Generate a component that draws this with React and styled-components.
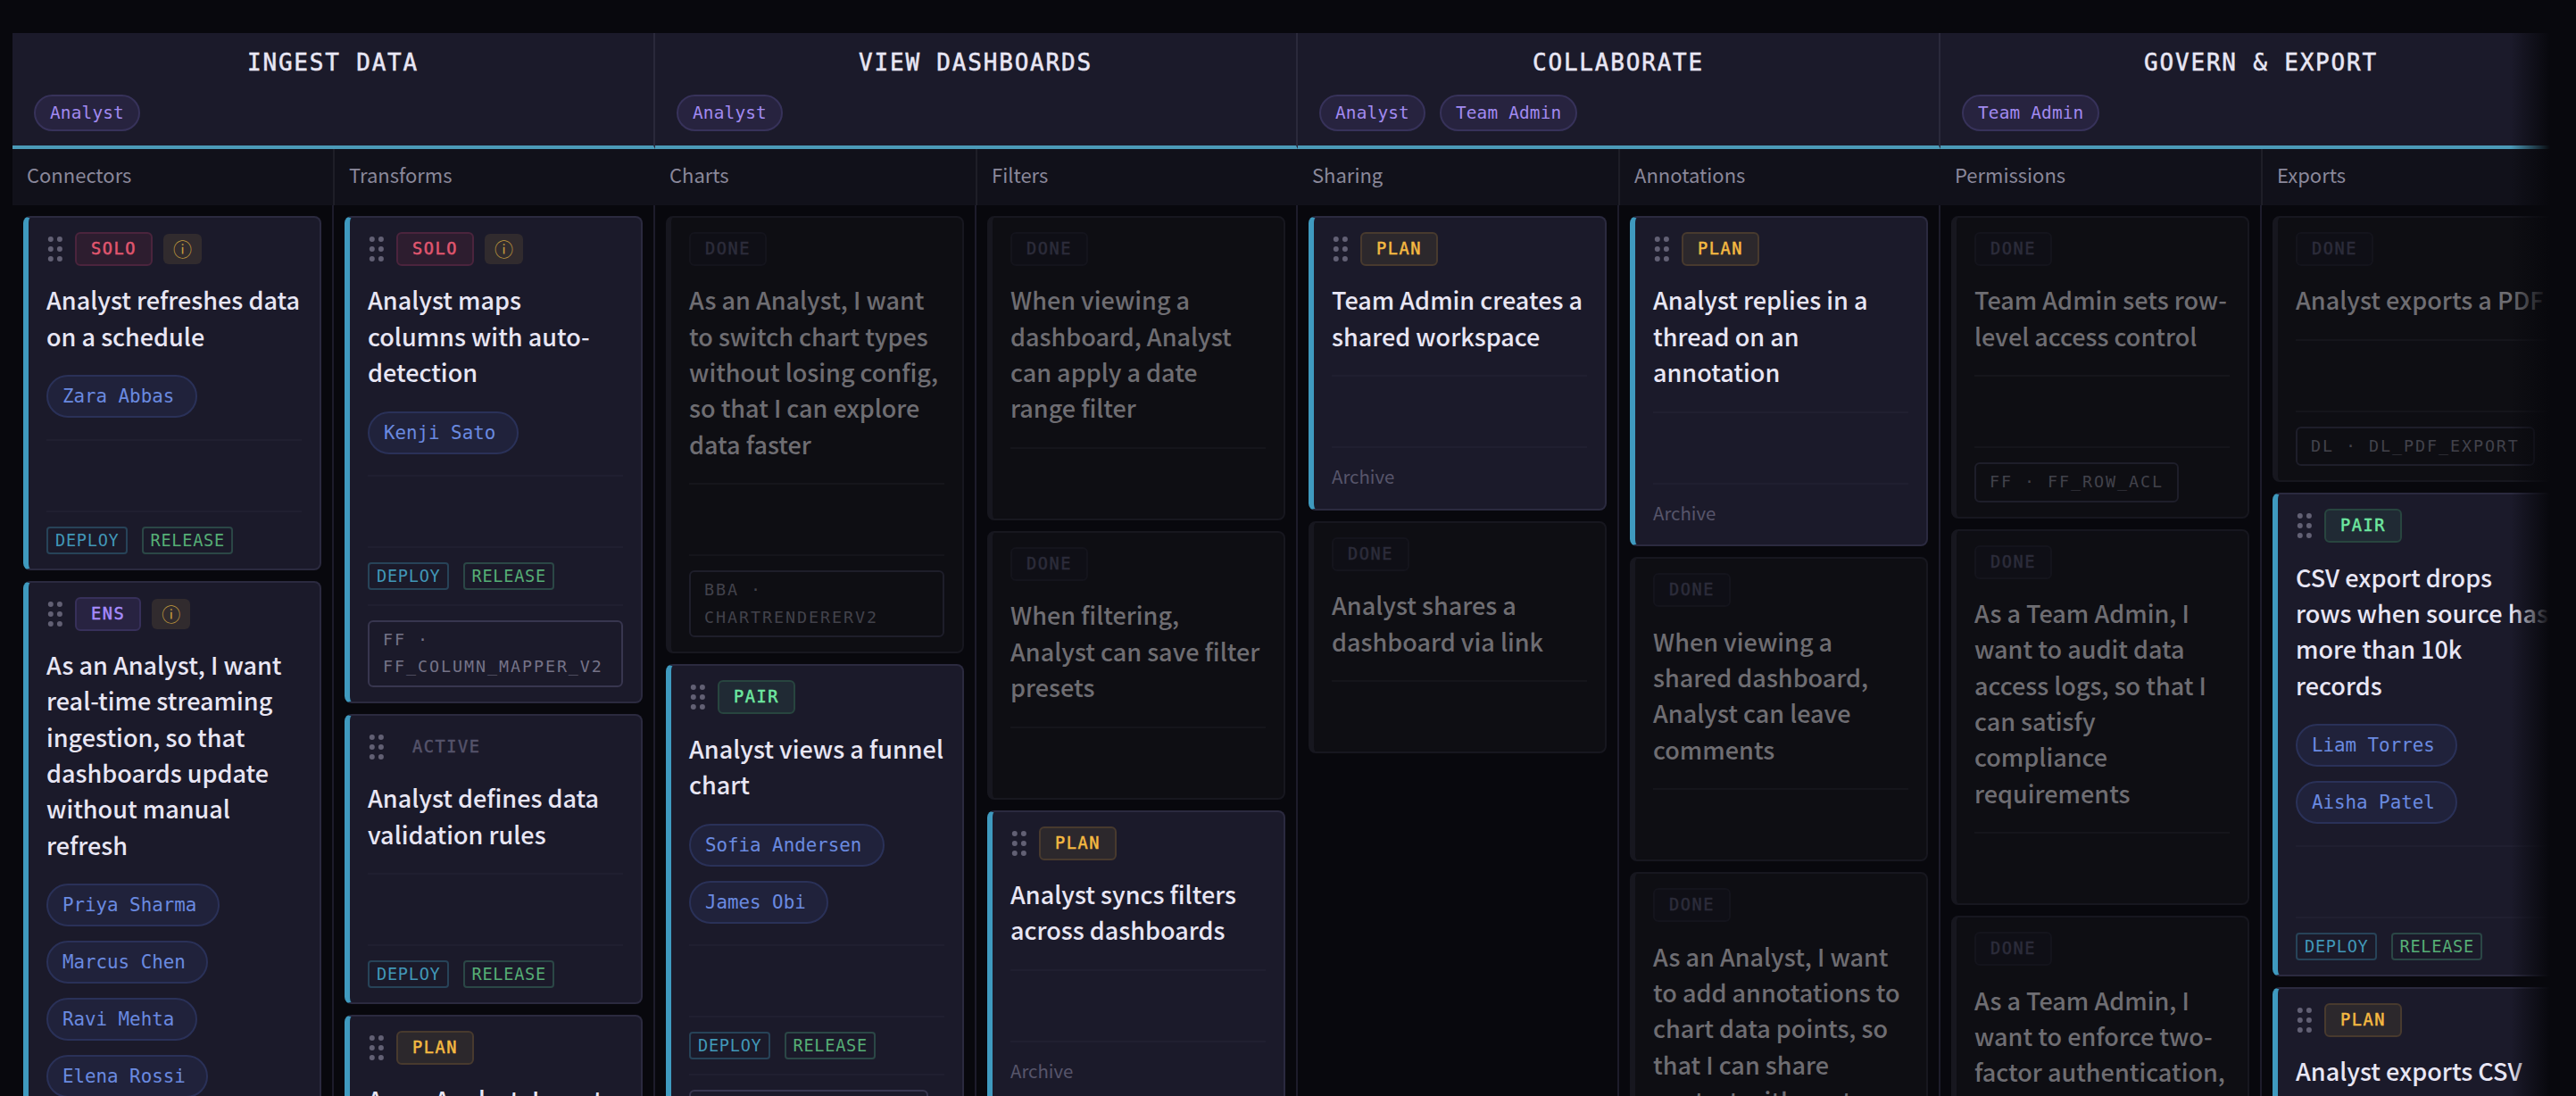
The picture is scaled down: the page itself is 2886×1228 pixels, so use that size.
import React from "react";
import styled, { createGlobalStyle, css } from "styled-components";

const sans = `"Noto Sans CJK JP", "Open Sans", sans-serif`;
const mono = `"DejaVu Sans Mono", monospace`;

const solo = { label: "SOLO", color: "#e0576f", bg: "#2d1d2f", border: "#4b243d" };
const ens = { label: "ENS", color: "#a78bfa", bg: "#282341", border: "#37305a" };
const pair = { label: "PAIR", color: "#6ee7a0", bg: "#202a34", border: "#28453f" };
const plan = { label: "PLAN", color: "#f5b942", bg: "#2c282c", border: "#483a2e" };
const active = { label: "ACTIVE", color: "#55536a", bg: "transparent", border: "transparent" };

const activities = [
  {
    title: "INGEST DATA",
    personas: ["Analyst"],
    steps: [
      {
        name: "Connectors",
        cards: [
          { status: solo, info: true, title: ["Analyst refreshes data", "on a schedule"], people: ["Zara Abbas"], ship: true },
          {
            status: ens,
            info: true,
            title: ["As an Analyst, I want", "real-time streaming", "ingestion, so that", "dashboards update", "without manual", "refresh"],
            people: ["Priya Sharma", "Marcus Chen", "Ravi Mehta", "Elena Rossi"],
            ship: true,
          },
        ],
      },
      {
        name: "Transforms",
        cards: [
          { status: solo, info: true, title: ["Analyst maps", "columns with auto-", "detection"], people: ["Kenji Sato"], ship: true, tag: "FF · FF_COLUMN_MAPPER_V2" },
          { status: active, title: ["Analyst defines data", "validation rules"], ship: true },
          { status: plan, title: ["As an Analyst, I want", "to preview changes"], archive: true },
        ],
      },
    ],
  },
  {
    title: "VIEW DASHBOARDS",
    personas: ["Analyst"],
    steps: [
      {
        name: "Charts",
        cards: [
          { done: true, title: ["As an Analyst, I want", "to switch chart types", "without losing config,", "so that I can explore", "data faster"], tag: "BBA · CHARTRENDERERV2" },
          { status: pair, title: ["Analyst views a funnel", "chart"], people: ["Sofia Andersen", "James Obi"], ship: true, tag: "FF · FF_FUNNEL_VIZ" },
        ],
      },
      {
        name: "Filters",
        cards: [
          { done: true, title: ["When viewing a", "dashboard, Analyst", "can apply a date", "range filter"] },
          { done: true, title: ["When filtering,", "Analyst can save filter", "presets"] },
          { status: plan, title: ["Analyst syncs filters", "across dashboards"], archive: true },
        ],
      },
    ],
  },
  {
    title: "COLLABORATE",
    personas: ["Analyst", "Team Admin"],
    steps: [
      {
        name: "Sharing",
        cards: [
          { status: plan, title: ["Team Admin creates a", "shared workspace"], archive: true },
          { done: true, title: ["Analyst shares a", "dashboard via link"] },
        ],
      },
      {
        name: "Annotations",
        cards: [
          { status: plan, title: ["Analyst replies in a", "thread on an", "annotation"], archive: true },
          { done: true, title: ["When viewing a", "shared dashboard,", "Analyst can leave", "comments"] },
          { done: true, title: ["As an Analyst, I want", "to add annotations to", "chart data points, so", "that I can share", "context with my team"] },
        ],
      },
    ],
  },
  {
    title: "GOVERN & EXPORT",
    personas: ["Team Admin"],
    steps: [
      {
        name: "Permissions",
        cards: [
          { done: true, title: ["Team Admin sets row-", "level access control"], tag: "FF · FF_ROW_ACL" },
          { done: true, title: ["As a Team Admin, I", "want to audit data", "access logs, so that I", "can satisfy", "compliance", "requirements"] },
          { done: true, title: ["As a Team Admin, I", "want to enforce two-", "factor authentication,", "so that accounts stay", "secure"] },
        ],
      },
      {
        name: "Exports",
        cards: [
          { done: true, title: ["Analyst exports a PDF"], tag: "DL · DL_PDF_EXPORT" },
          { status: pair, title: ["CSV export drops", "rows when source has", "more than 10k", "records"], people: ["Liam Torres", "Aisha Patel"], ship: true },
          { status: plan, title: ["Analyst exports CSV"], archive: true },
        ],
      },
    ],
  },
];

function DragHandle() {
  return (
    <Handle viewBox="0 0 20 28">
      {[3, 14, 25].map((y) => (
        <g key={y}>
          <circle cx="4.8" cy={y} r="3" />
          <circle cx="14.9" cy={y} r="3" />
        </g>
      ))}
    </Handle>
  );
}

function StoryCard({ card }) {
  const { status, done, info, title, people, ship, archive, tag } = card;
  return (
    <Card $done={done}>
      <CardTop>
        {!done && <DragHandle />}
        {done ? <DoneBadge>DONE</DoneBadge> : <Badge $tone={status}>{status.label}</Badge>}
        {info && <InfoChip>ⓘ</InfoChip>}
      </CardTop>
      <Title $done={done}>
        {title.map((line) => (
          <span key={line}>{line}</span>
        ))}
      </Title>
      {people && (
        <People>
          {people.map((name) => (
            <Person key={name}>{name}</Person>
          ))}
        </People>
      )}
      <Notes $done={done} />
      {ship && (
        <Footer>
          <Ship $color="#4197b8" $border="#274358">DEPLOY</Ship>
          <Ship $color="#56ae76" $border="#2b4746">RELEASE</Ship>
        </Footer>
      )}
      {archive && (
        <Footer>
          <Archive>Archive</Archive>
        </Footer>
      )}
      {tag && (
        <Footer $done={done}>
          <Tag $done={done}>{tag}</Tag>
        </Footer>
      )}
    </Card>
  );
}

export default function App() {
  return (
    <Page>
      <GlobalStyle />
      <Board>
        {activities.map((activity) => (
          <Activity key={activity.title}>
            <ActivityHead>
              <ActivityTitle>{activity.title}</ActivityTitle>
              <Personas>
                {activity.personas.map((p) => (
                  <Persona key={p}>{p}</Persona>
                ))}
              </Personas>
            </ActivityHead>
            <Steps>
              {activity.steps.map((step) => (
                <Step key={step.name}>
                  <StepName>{step.name}</StepName>
                  <Stack>
                    {step.cards.map((card, i) => (
                      <StoryCard key={i} card={card} />
                    ))}
                  </Stack>
                </Step>
              ))}
            </Steps>
          </Activity>
        ))}
      </Board>
      <EdgeFade />
    </Page>
  );
}

const GlobalStyle = createGlobalStyle`
  * {
    box-sizing: border-box;
  }
  body {
    margin: 0;
    background: #08080d;
    overflow: hidden;
  }
`;

const Page = styled.main`
  position: relative;
  width: 100%;
  height: 1228px;
  overflow: hidden;
  background: #08080d;
  font-family: ${sans};
`;

const Board = styled.div`
  display: flex;
  width: 2894px;
  height: 1228px;
  padding: 37px 0 0 14px;
`;

/* right edge of the scroll area */
const EdgeFade = styled.div`
  position: absolute;
  top: 0;
  right: 0;
  bottom: 0;
  width: 73px;
  background: linear-gradient(to right, transparent, #08080d 44px);
`;

const Activity = styled.section`
  display: flex;
  flex-direction: column;
  flex: 0 0 720px;
`;

const ActivityHead = styled.header`
  display: flex;
  flex-direction: column;
  gap: 18px;
  height: 130px;
  padding: 16px 24px;
  background: #1b1a2a;
  border-right: 2px solid #2a293b;
  border-bottom: 4px solid #4b9ab8;
`;

const ActivityTitle = styled.h2`
  margin: 0;
  font: 500 26px/35px ${mono};
  letter-spacing: 1.8px;
  text-align: center;
  color: #e8e6f4;
  -webkit-text-stroke: 0.5px #e8e6f4;
`;

const Personas = styled.div`
  display: flex;
  gap: 16px;
`;

const Persona = styled.span`
  height: 41px;
  padding: 0 16px;
  border: 2px solid #37325a;
  border-radius: 21px;
  background: #27233f;
  font: 19.4px/37px ${mono};
  letter-spacing: 0.17px;
  color: #a18af0;
`;

const Steps = styled.div`
  display: flex;
  flex: 1;
`;

const Step = styled.div`
  display: flex;
  flex-direction: column;
  width: 360px;
`;

const StepName = styled.h3`
  height: 63px;
  margin: 0;
  padding: 0 16px;
  background: #11111a;
  font-size: 22px;
  font-weight: 400;
  line-height: 57px;
  color: #8a889a;
  ${Step} + ${Step} & {
    margin-left: -1px;
    border-left: 2px solid #1e1e27;
  }
`;

const Stack = styled.div`
  display: flex;
  flex-direction: column;
  flex: 1;
  gap: 12px;
  padding: 12px;
  border-right: 2px solid #1d1c2b;
`;

const Card = styled.article`
  flex: none;
  padding: 16px 20px;
  border: 2px solid #2b2a3f;
  border-left: 6px solid #3f9abf;
  border-radius: 8px;
  background: #1b1a2a;
  ${({ $done }) =>
    $done &&
    css`
      border-color: #17171f;
      background: #0e0e13;
    `}
`;

const CardTop = styled.div`
  display: flex;
  align-items: center;
  gap: 12px;
  height: 38px;
  margin-bottom: 18.4px;
`;

const Handle = styled.svg`
  width: 20px;
  height: 28px;
  fill: #626074;
`;

const Badge = styled.span`
  height: 38px;
  padding: 0 16px;
  border: 2px solid ${({ $tone }) => $tone.border};
  border-radius: 6px;
  background: ${({ $tone }) => $tone.bg};
  font: 18.6px/34px ${mono};
  letter-spacing: 1.55px;
  color: ${({ $tone }) => $tone.color};
  -webkit-text-stroke: 0.5px ${({ $tone }) => $tone.color};
`;

const DoneBadge = styled.span`
  height: 38px;
  padding: 0 16px;
  border: 2px solid #14141c;
  border-radius: 6px;
  background: #0f0f16;
  font: 18.6px/34px ${mono};
  letter-spacing: 1.55px;
  color: #2c2c3a;
  -webkit-text-stroke: 0.5px #2c2c3a;
`;

const InfoChip = styled.span`
  width: 43px;
  height: 34px;
  border-radius: 6px;
  background: #312b2e;
  font-size: 21px;
  line-height: 33px;
  text-align: center;
  color: #c29c3e;
`;

const Title = styled.h4`
  display: flex;
  flex-direction: column;
  margin: 0;
  font-size: 27px;
  font-weight: 500;
  line-height: 40.32px;
  white-space: nowrap;
  color: ${({ $done }) => ($done ? "#6e6d72" : "#e8e6f4")};
`;

const People = styled.div`
  display: flex;
  flex-direction: column;
  align-items: flex-start;
  gap: 16px;
  margin-top: 23.3px;
`;

const Person = styled.span`
  height: 48px;
  padding: 0 23.4px 0 16px;
  border: 2px solid #2a3158;
  border-radius: 24px;
  background: #20223b;
  font: 20.8px/44px ${mono};
  color: #6a8ae0;
`;

const Notes = styled.div`
  height: 64px;
  margin-top: 23.3px;
  border-top: 2px solid ${({ $done }) => ($done ? "#15151b" : "#201f30")};
`;

const Footer = styled.div`
  display: flex;
  gap: 16px;
  margin-top: 16px;
  padding-top: 16px;
  border-top: 2px solid ${({ $done }) => ($done ? "#15151b" : "#201f30")};
`;

const Ship = styled.span`
  height: 31px;
  padding: 0 7px 0 8px;
  border: 2px solid ${({ $border }) => $border};
  border-radius: 4px;
  font: 18.6px/27px ${mono};
  letter-spacing: 0.72px;
  color: ${({ $color }) => $color};
`;

const Archive = styled.span`
  padding-bottom: 4px;
  font-size: 20.4px;
  line-height: 31.7px;
  color: #57556a;
`;

const Tag = styled.span`
  padding: 4.9px 15px;
  border: 2px solid ${({ $done }) => ($done ? "#1e1e2a" : "#38364f")};
  border-radius: 6px;
  font: 18.4px/30.6px ${mono};
  letter-spacing: 1.92px;
  color: ${({ $done }) => ($done ? "#42424b" : "#757388")};
`;
